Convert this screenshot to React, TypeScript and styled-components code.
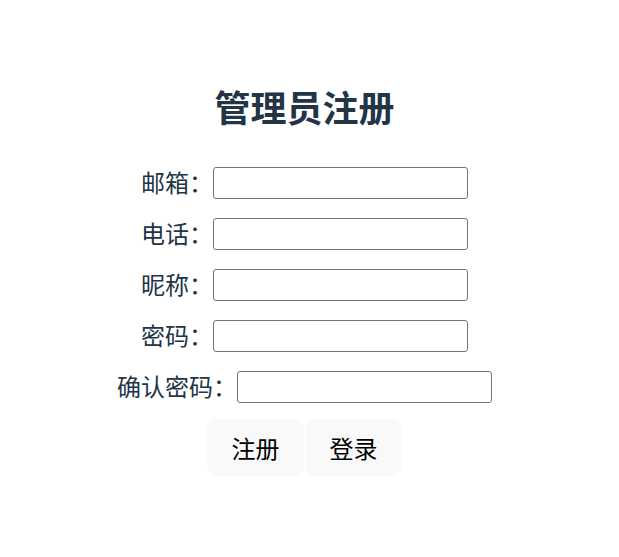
import React from "react";
import styled, { createGlobalStyle } from "styled-components";

const GlobalStyle = createGlobalStyle`
  html, body {
    margin: 0;
    padding: 0;
    background: #ffffff;
  }
  body {
    font-family: "Noto Sans CJK SC", "Noto Sans", sans-serif;
    color: #213547;
  }
`;

const Page = styled.div`
  box-sizing: border-box;
  width: 609px;
  padding-top: 83px;
  display: flex;
  flex-direction: column;
  align-items: center;
`;

const Title = styled.h1`
  margin: 0 0 38px;
  font-size: 36px;
  line-height: 46px;
  font-weight: 700;
  color: #213547;
`;

const Form = styled.form`
  display: flex;
  flex-direction: column;
  align-items: center;
  gap: 19px;
`;

const Row = styled.div`
  display: flex;
  align-items: center;
  height: 32px;
`;

const Label = styled.label`
  font-size: 24px;
  line-height: 32px;
  padding-bottom: 2px;
  font-weight: 400;
  color: #213547;
  white-space: nowrap;
`;

const Input = styled.input`
  box-sizing: border-box;
  width: 255px;
  height: 32px;
  border: 1px solid #767676;
  border-radius: 3px;
  padding: 1px 4px;
  font-size: 16px;
  background: #ffffff;
  outline: none;
`;

const Actions = styled.div`
  display: flex;
  gap: 1px;
  margin-top: -3px;
`;

const Button = styled.button`
  box-sizing: border-box;
  width: 97px;
  height: 57px;
  border: 1px solid transparent;
  border-radius: 10px;
  background: #f9f9f9;
  color: #000000;
  font-family: "Noto Sans CJK SC", "Noto Sans", sans-serif;
  font-size: 24px;
  font-weight: 400;
  padding: 0;
  cursor: pointer;
`;

const fields = ["邮箱：", "电话：", "昵称：", "密码：", "确认密码："];

export default function App() {
  return (
    <>
      <GlobalStyle />
      <Page>
        <Title>管理员注册</Title>
        <Form onSubmit={(e) => e.preventDefault()}>
          {fields.map((f) => (
            <Row key={f}>
              <Label>{f}</Label>
              <Input type={f.includes("密码") ? "password" : "text"} />
            </Row>
          ))}
          <Actions>
            <Button type="submit">注册</Button>
            <Button type="button">登录</Button>
          </Actions>
        </Form>
      </Page>
    </>
  );
}
